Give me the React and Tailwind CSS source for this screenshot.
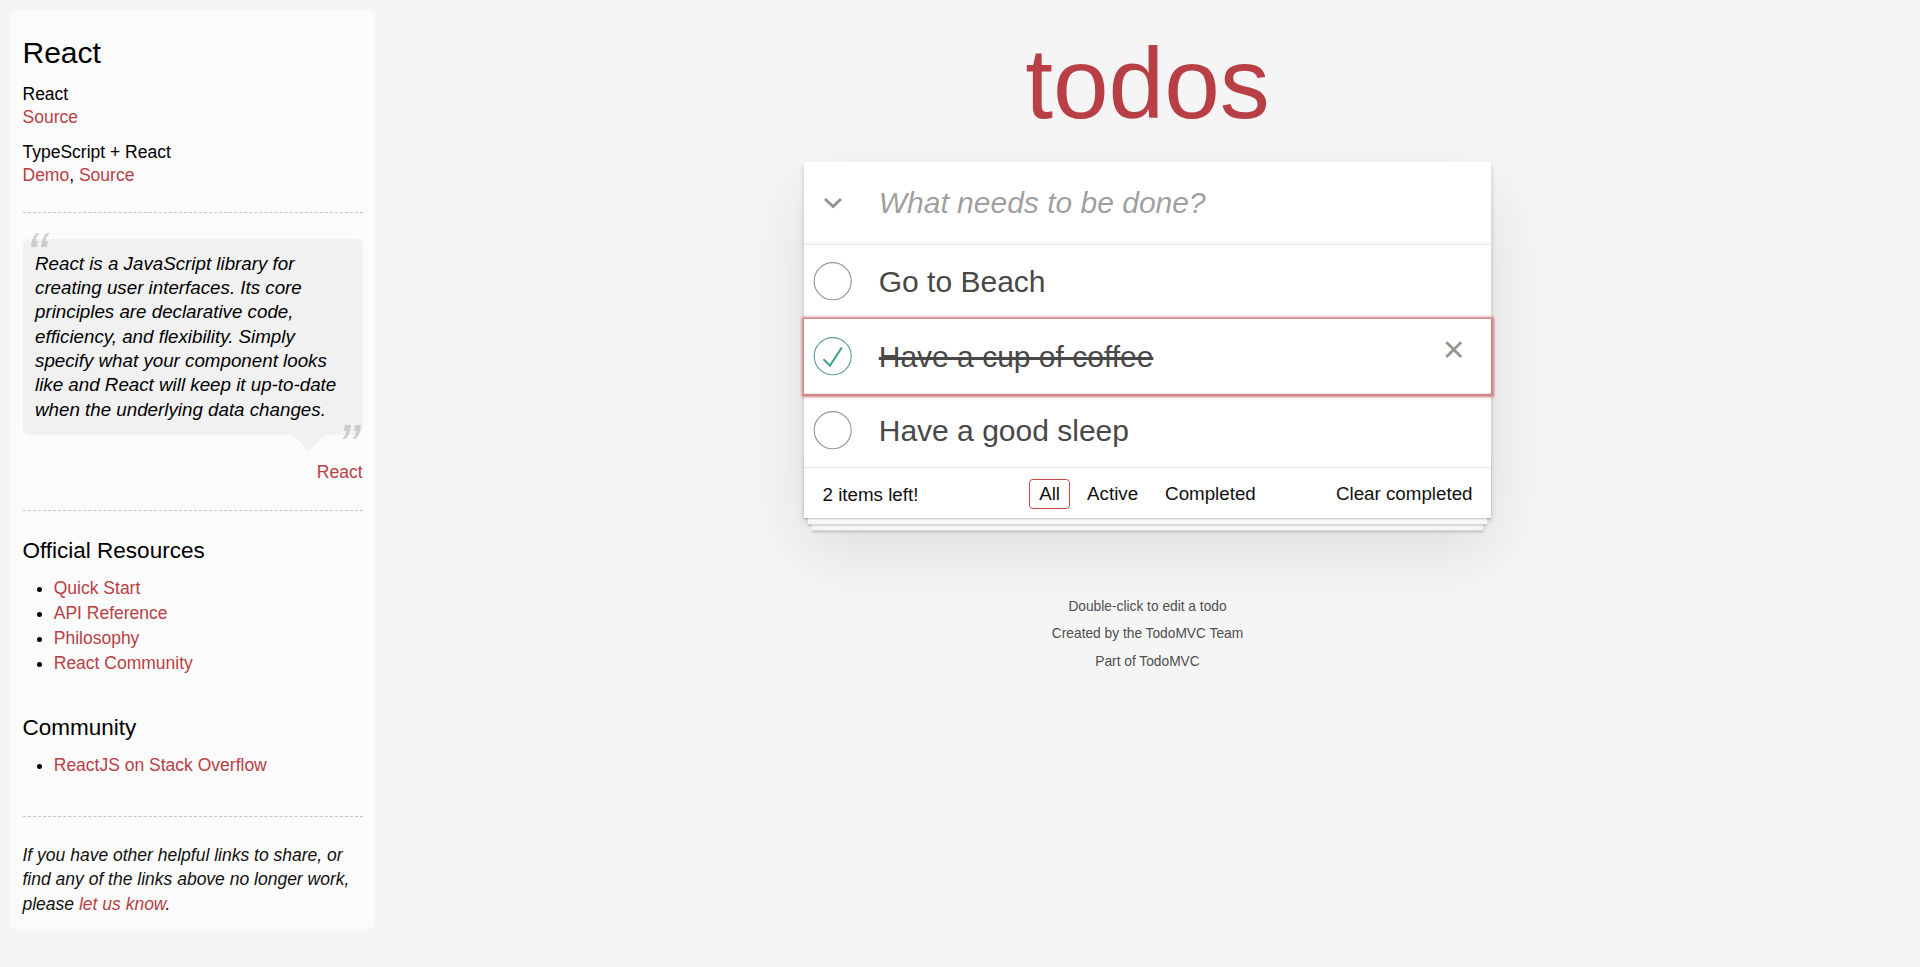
import React from 'react';

const todos = [
  { id: 1, title: 'Go to Beach', done: false },
  { id: 2, title: 'Have a cup of coffee', done: true, focused: true },
  { id: 3, title: 'Have a good sleep', done: false },
];

function Toggle({ done }) {
  return (
    <svg width="50" height="50" viewBox="-10 -18 100 135" className="shrink-0">
      <circle cx="50" cy="50" r="50" fill="none" stroke={done ? '#59A193' : '#949494'} strokeWidth="3" />
      {done && <path fill="#3EA390" d="M72 25L42 71 27 56l-4 4 20 20 34-52z" />}
    </svg>
  );
}

function Hr() {
  return (
    <hr className="my-[25px] h-0 border-0 border-t-[1.25px] border-b-[1.25px] border-dashed border-t-[#c5c5c5] border-b-[#f7f7f7]" />
  );
}

function Sidebar() {
  const link = 'text-[#b83f45] no-underline';
  return (
    <aside className="w-[375px] shrink-0 pl-[10px] pt-[10px]">
      <div className="w-[365px] p-[12.5px] rounded-[6.25px] bg-[rgba(255,255,255,0.6)] text-[#000]">
        <header>
          <h3 className="my-[12.5px] text-[30px] leading-[36px] font-normal">React</h3>
          <div>
            <h5 className="mt-[12.5px] text-[17.5px] leading-[21px] font-normal">React</h5>
            <a href="#" className={link}>Source</a>
            <h5 className="mt-[12.5px] text-[17.5px] leading-[21px] font-normal">TypeScript + React</h5>
            <a href="#" className={link}>Demo</a>, <a href="#" className={link}>Source</a>
          </div>
        </header>
        <Hr />
        <blockquote className="relative mt-[25px] mb-[75px] p-[12.5px] rounded-[6.25px] bg-[rgba(0,0,0,0.04)]">
          <span className="absolute top-[-25px] left-[3.75px] text-[62.5px] leading-[81.25px] italic opacity-15">“</span>
          <p className="text-[18.75px] leading-[24.375px] italic">
            React is a JavaScript library for creating user interfaces. Its core principles are declarative code, efficiency, and flexibility. Simply specify what your component looks like and React will keep it up-to-date when the underlying data changes.
          </p>
          <span className="absolute bottom-[-52.5px] right-[3.75px] text-[62.5px] leading-[81.25px] italic opacity-15">”</span>
          <div className="absolute top-full right-[37.5px] w-0 h-0 border-[16.25px] border-transparent border-t-[rgba(0,0,0,0.04)]" />
          <footer className="absolute bottom-[-50px] right-0">
            <a href="#" className={link}>React</a>
          </footer>
        </blockquote>
        <Hr />
        <h4 className="my-[12.5px] text-[22.5px] leading-[27px] font-normal">Official Resources</h4>
        <ul className="ml-[31.25px] mb-[37.5px] list-disc">
          {['Quick Start', 'API Reference', 'Philosophy', 'React Community'].map((t) => (
            <li key={t} className="leading-[25px]">
              <a href="#" className={link}>{t}</a>
            </li>
          ))}
        </ul>
        <h4 className="my-[12.5px] text-[22.5px] leading-[27px] font-normal">Community</h4>
        <ul className="ml-[31.25px] mb-[37.5px] list-disc">
          <li className="leading-[25px]">
            <a href="#" className={link}>ReactJS on Stack Overflow</a>
          </li>
        </ul>
        <footer>
          <Hr />
          <em className="text-[#111]">
            If you have other helpful links to share, or find any of the links above no longer work, please{' '}
            <a href="#" className={link}>let us know</a>.
          </em>
        </footer>
      </div>
    </aside>
  );
}

function TodoRow({ todo }) {
  return (
    <li
      className={`relative flex items-center border-b-[1.25px] border-[#ededed] last:border-b-0 ${
        todo.focused ? 'z-[1] shadow-[0_0_2.5px_2.5px_#CF7D7D]' : ''
      }`}
    >
      <div className="w-[75px] shrink-0 flex items-center">
        <Toggle done={todo.done} />
      </div>
      <label
        className={`flex-1 pt-[19.75px] pb-[17.75px] pr-[18.75px] text-[30px] leading-[36px] text-[#484848] ${
          todo.done ? 'line-through' : ''
        }`}
      >
        {todo.title}
      </label>
      {todo.focused && (
        <button className="w-[50px] h-[50px] mr-[12.5px] mb-[4px] flex flex-col items-center justify-start text-[37.5px] leading-[41.25px] text-[#949494]">
          ×
        </button>
      )}
    </li>
  );
}

export default function App() {
  const filters = ['All', 'Active', 'Completed'];
  return (
    <div className="min-h-screen flex bg-[#f5f5f5] font-['Liberation_Sans',Arial,sans-serif] text-[17.5px] leading-[24.5px] text-[#111]">
      <Sidebar />
      <main className="flex-1 min-w-0">
        <div className="w-[687.5px] mx-auto">
          <h1 className="pt-[33.35px] pb-[29.15px] text-center text-[100px] leading-[100px] font-normal text-[#b83f45]">
            todos
          </h1>
          <section className="relative bg-white shadow-[0_2.5px_5px_0_rgba(0,0,0,0.2),0_31.25px_62.5px_0_rgba(0,0,0,0.1)]">
            <header className="flex items-center h-[81.25px] shadow-[inset_0_-2.5px_1.25px_rgba(0,0,0,0.03)]">
              <div className="w-[75px] shrink-0 pl-[18.75px] flex items-center">
                <svg width="20" height="12" viewBox="0 0 20 12">
                  <path d="M2 2l8 7.5L18 2" fill="none" stroke="#949494" strokeWidth="3" />
                </svg>
              </div>
              <input
                className="flex-1 h-full pr-[20px] text-[30px] leading-[42px] outline-none bg-transparent placeholder:italic placeholder:text-[rgba(0,0,0,0.4)]"
                placeholder="What needs to be done?"
              />
            </header>
            <ul className="border-t-[1.25px] border-[#e6e6e6]">
              {todos.map((t) => (
                <TodoRow key={t.id} todo={t} />
              ))}
            </ul>
            <footer className="relative h-[51.25px] border-t-[1.25px] border-[#e6e6e6] px-[18.75px] py-[12.5px] text-[18.75px] text-[#111]">
              <div className="absolute inset-x-0 bottom-0 h-[62.5px] pointer-events-none shadow-[0_1.25px_1.25px_rgba(0,0,0,0.2),0_10px_0_-3.75px_#f6f6f6,0_11.25px_1.25px_-3.75px_rgba(0,0,0,0.2),0_20px_0_-7.5px_#f6f6f6,0_21.25px_2.5px_-7.5px_rgba(0,0,0,0.2)]" />
              <div className="relative grid grid-cols-[1fr_auto_1fr] items-center h-[25px]">
                <span className="leading-[25px]">2 items left!</span>
                <ul className="flex items-center h-[25px]">
                  {filters.map((f) => (
                    <li key={f}>
                      <a
                        href="#"
                        className={`block mx-[3.75px] px-[8.75px] py-[3.75px] leading-[20px] border-[1.25px] rounded-[3.75px] ${
                          f === 'All' ? 'border-[#CE4646]' : 'border-transparent'
                        }`}
                      >
                        {f}
                      </a>
                    </li>
                  ))}
                </ul>
                <span className="justify-self-end leading-[25px] mb-[2px] cursor-pointer">Clear completed</span>
              </div>
            </footer>
          </section>
          <footer className="mt-[81.25px] text-center text-[13.75px] leading-[13.75px] text-[#4d4d4d] [text-shadow:0_1px_0_rgba(255,255,255,0.5)]">
            <p className="mb-[13.75px]">Double-click to edit a todo</p>
            <p className="mb-[13.75px]">Created by the TodoMVC Team</p>
            <p className="mb-[13.75px]">Part of TodoMVC</p>
          </footer>
        </div>
      </main>
    </div>
  );
}
